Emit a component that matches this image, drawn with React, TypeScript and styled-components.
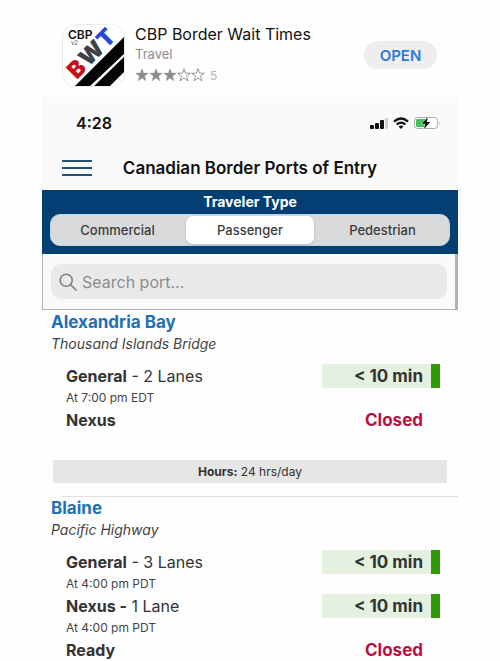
import React, { useState } from "react";
import styled, { createGlobalStyle, css } from "styled-components";

const GlobalStyle = createGlobalStyle`
  * { box-sizing: border-box; }
  body {
    margin: 0;
    background: #fefefe;
    color: #333;
    font-family: Inter, Roboto, "Liberation Sans", sans-serif;
  }
  h1, h2, h3, p { margin: 0; }
  button, input { font-family: inherit; }
`;

const Page = styled.div`
  height: 100vh;
  overflow: hidden;
  padding: 0 42px;
`;

const StoreHeader = styled.header`
  display: flex;
  align-items: flex-start;
  gap: 10px;
  padding: 24px 21px 10px 20px;
`;

const AppIcon = styled.svg`
  flex: none;
  width: 63px;
  height: 63px;
`;

const StoreInfo = styled.div`
  flex: 1;
`;

const AppName = styled.h1`
  font-size: 16px;
  line-height: 20px;
  font-weight: 400;
  color: #111;
  white-space: nowrap;
`;

const Category = styled.p`
  font-size: 13px;
  line-height: 20px;
  color: #8b8b8d;
`;

const Rating = styled.div`
  display: flex;
  align-items: center;
  height: 22px;
  font-size: 12px;
  color: #b4b4b6;
`;

const StarShape = styled.svg`
  width: 14px;
  height: 14px;
`;

const RatingCount = styled.span`
  margin-left: 5px;
`;

const OpenButton = styled.button`
  flex: none;
  width: 73px;
  height: 28px;
  margin-top: 17px;
  padding: 0;
  border: 0;
  border-radius: 14px;
  background: #eeeeef;
  color: #2b7bd9;
  font-size: 15px;
  font-weight: 600;
`;

const StatusBar = styled.div`
  display: flex;
  align-items: center;
  justify-content: space-between;
  height: 52px;
  padding: 0 17px 0 34px;
  background: #fafafb;
`;

const Clock = styled.span`
  font-size: 16px;
  font-weight: 600;
  color: #111;
`;

const StatusIcons = styled.svg`
  width: 72px;
  height: 14px;
`;

const NavBar = styled.div`
  display: grid;
  grid-template-columns: 30px 1fr 30px;
  align-items: center;
  height: 41px;
  padding: 0 20px 4px;
  background: #fafafb;
`;

const MenuButton = styled.button`
  display: flex;
  padding: 0;
  border: 0;
  background: none;
`;

const ScreenTitle = styled.h2`
  font-size: 17px;
  font-weight: 600;
  color: #111;
  text-align: center;
  white-space: nowrap;
`;

const TravelerBar = styled.section`
  padding: 2px 8px 8px;
  background: #033f73;
`;

const TravelerTitle = styled.h3`
  font-size: 14px;
  line-height: 20px;
  font-weight: 700;
  color: #fff;
  text-align: center;
`;

const Segments = styled.div`
  display: grid;
  grid-template-columns: 133px 1fr 133px;
  gap: 2px;
  height: 32px;
  margin-top: 2px;
  padding: 1px 0;
  border: 1px solid #c3d3e2;
  border-radius: 10px;
  background: #d9dadb;
`;

const Segment = styled.button<{ $active: boolean }>`
  padding: 0;
  border: 0;
  border-radius: 7px;
  background: none;
  color: #3a3a3a;
  font-size: 13px;
  font-weight: 500;
  ${(p) =>
    p.$active &&
    css`
      background: #fff;
      box-shadow: 0 1px 3px rgba(0, 0, 0, 0.15);
    `}
`;

const SearchArea = styled.div`
  padding: 10px 8px;
  border: solid #b3b3b5;
  border-width: 0 3px 1px 1px;
  background: #fafafa;
`;

const SearchBox = styled.label`
  display: flex;
  align-items: center;
  gap: 5px;
  height: 35px;
  padding: 0 8px;
  border-radius: 10px;
  background: #e9e9ea;
`;

const SearchInput = styled.input`
  flex: 1;
  min-width: 0;
  padding: 0;
  border: 0;
  outline: 0;
  background: none;
  font-size: 16px;
  color: #333;
  &::placeholder {
    color: #8c8c90;
    opacity: 1;
  }
`;

const Port = styled.article`
  padding: 0 11px 13px 9px;
  & + & {
    background: linear-gradient(#dededf, #dededf) right top / calc(100% - 19px) 1px no-repeat;
  }
`;

const PortName = styled.h2`
  font-size: 17px;
  line-height: 24px;
  font-weight: 700;
  color: #1f70b5;
`;

const Crossing = styled.p`
  font-size: 14px;
  line-height: 20px;
  font-style: italic;
  color: #444;
`;

const Lanes = styled.div`
  padding: 10px 7px 0 15px;
`;

const LaneRow = styled.div`
  display: flex;
  align-items: center;
  justify-content: space-between;
  height: 24px;
  font-size: 16px;
  line-height: 24px;
  white-space: nowrap;
`;

const LaneTime = styled.p`
  font-size: 12px;
  line-height: 20px;
  color: #444;
`;

const Wait = styled.span<{ $closed?: boolean }>`
  width: 118px;
  padding-right: 8px;
  border-right: 9px solid ${(p) => (p.$closed ? "transparent" : "#309a05")};
  background: ${(p) => (p.$closed ? "none" : "#e4f0e0")};
  background-clip: padding-box;
  color: ${(p) => (p.$closed ? "#b80f42" : "#333")};
  font-size: 17px;
  font-weight: 700;
  text-align: right;
`;

const Hours = styled.p`
  margin: 28px 0 0 2px;
  background: #e6e6e6;
  font-size: 12px;
  line-height: 23px;
  text-align: center;
`;

type Lane = { name: string; open?: string; dashBold?: boolean; time?: string };
type PortData = { name: string; crossing: string; lanes: Lane[]; hours?: string };

const ports: PortData[] = [
  {
    name: "Alexandria Bay",
    crossing: "Thousand Islands Bridge",
    lanes: [{ name: "General", open: "2 Lanes", time: "At 7:00 pm EDT" }, { name: "Nexus" }],
    hours: "24 hrs/day",
  },
  {
    name: "Blaine",
    crossing: "Pacific Highway",
    lanes: [
      { name: "General", open: "3 Lanes", time: "At 4:00 pm PDT" },
      { name: "Nexus", open: "1 Lane", dashBold: true, time: "At 4:00 pm PDT" },
      { name: "Ready" },
    ],
  },
];

const travelerTypes = ["Commercial", "Passenger", "Pedestrian"];

function Star({ filled }: { filled: boolean }) {
  return (
    <StarShape viewBox="0 0 14 14" aria-hidden="true">
      <path
        d="M7 .7 8.5 5.1 13.3 5.2 9.5 8.1 10.9 12.8 7 10 3.1 12.8 4.5 8.1 .7 5.2 5.5 5.1Z"
        fill={filled ? "#8b8b8d" : "none"}
        stroke="#8b8b8d"
        strokeWidth={filled ? 0.4 : 0.9}
      />
    </StarShape>
  );
}

function Logo() {
  return (
    <AppIcon viewBox="0 0 63 63" role="img" aria-label="CBP BWT v2">
      <defs>
        <clipPath id="tile">
          <rect x=".5" y=".5" width="62" height="62" rx="13" />
        </clipPath>
      </defs>
      <g clipPath="url(#tile)">
        <rect width="63" height="63" fill="#fff" />
        <path d="M63 12V29L27 63H12Z" fill="#050505" />
        <path d="M63 32V47L47 63H31Z" fill="#050505" />
        <g fontFamily="Inter, sans-serif" fontWeight="900" fontSize="23" textAnchor="middle">
          <text transform="translate(14.5 45) rotate(-45)" y="8" fill="#c4121b">B</text>
          <text transform="translate(29.5 29) rotate(-45)" y="8" fill="#3c4146">W</text>
          <text transform="translate(44 14) rotate(-45)" y="8" fill="#2348d8">T</text>
        </g>
        <text x="6" y="15" fontFamily="Inter, sans-serif" fontWeight="600" fontSize="12" fill="#111">CBP</text>
        <text x="9" y="21" fontFamily="Inter, sans-serif" fontSize="6" fill="#555">v2</text>
      </g>
      <rect x=".5" y=".5" width="62" height="62" rx="13" fill="none" stroke="#ececee" />
    </AppIcon>
  );
}

function PhoneStatus() {
  return (
    <StatusIcons viewBox="0 0 72 14" role="img" aria-label="Signal, Wi-Fi, battery charging">
      <g fill="#111">
        <rect x="1" y="9" width="4" height="4" rx="1" />
        <rect x="6" y="7" width="4" height="6" rx="1" />
        <rect x="11" y="4" width="4" height="9" rx="1" />
      </g>
      <rect x="16" y="2" width="3" height="11" rx="1" fill="#cfcfd1" />
      <g fill="none" stroke="#111" strokeWidth="2.2">
        <path d="M25 5.6Q32 -.6 39 5.6" />
        <path d="M27.6 8.5Q32 4.6 36.4 8.5" />
      </g>
      <path d="M29.6 10.4Q32 8.4 34.4 10.4L32 12.9Z" fill="#111" />
      <rect x="45.5" y="1.5" width="23" height="11" rx="3" fill="#fff" stroke="#a9a9ab" />
      <path d="M48.5 3H56V11H48.5Q47 11 47 9.5V4.5Q47 3 48.5 3Z" fill="#43c25c" />
      <path d="M70 5.2Q71.6 7 70 8.8Z" fill="#a9a9ab" />
      <path d="M59 1 52.6 7.8H56.3L54.8 13 61.4 6.1H57.6Z" fill="#111" stroke="#fff" strokeWidth="1" paintOrder="stroke" />
    </StatusIcons>
  );
}

export default function App() {
  const [type, setType] = useState("Passenger");
  return (
    <>
      <GlobalStyle />
      <Page>
        <StoreHeader>
          <Logo />
          <StoreInfo>
            <AppName>CBP Border Wait Times</AppName>
            <Category>Travel</Category>
            <Rating>
              {[1, 2, 3, 4, 5].map((n) => (
                <Star key={n} filled={n <= 3} />
              ))}
              <RatingCount>5</RatingCount>
            </Rating>
          </StoreInfo>
          <OpenButton>OPEN</OpenButton>
        </StoreHeader>
        <StatusBar>
          <Clock>4:28</Clock>
          <PhoneStatus />
        </StatusBar>
        <NavBar>
          <MenuButton aria-label="Menu">
            <svg width="30" height="18" viewBox="0 0 30 18" stroke="#24507a" strokeWidth="2">
              <path d="M0 2H30M0 9H30M0 16H30" />
            </svg>
          </MenuButton>
          <ScreenTitle>Canadian Border Ports of Entry</ScreenTitle>
        </NavBar>
        <TravelerBar>
          <TravelerTitle>Traveler Type</TravelerTitle>
          <Segments>
            {travelerTypes.map((t) => (
              <Segment key={t} $active={t === type} aria-pressed={t === type} onClick={() => setType(t)}>
                {t}
              </Segment>
            ))}
          </Segments>
        </TravelerBar>
        <SearchArea>
          <SearchBox>
            <svg width="18" height="18" viewBox="0 0 18 18" fill="none" stroke="#808084" strokeWidth="1.6" aria-hidden="true">
              <circle cx="7.2" cy="7.2" r="6" />
              <path d="M11.6 11.6 17 17" strokeLinecap="round" />
            </svg>
            <SearchInput type="text" placeholder="Search port..." aria-label="Search port" />
          </SearchBox>
        </SearchArea>
        <main>
          {ports.map((port) => (
            <Port key={port.name}>
              <PortName>{port.name}</PortName>
              <Crossing>{port.crossing}</Crossing>
              <Lanes>
                {port.lanes.map((lane) => (
                  <React.Fragment key={lane.name}>
                    <LaneRow>
                      <span>
                        <b>{lane.dashBold ? `${lane.name} -` : lane.name}</b>
                        {lane.open && (lane.dashBold ? ` ${lane.open}` : ` - ${lane.open}`)}
                      </span>
                      <Wait $closed={!lane.open}>{lane.open ? "< 10 min" : "Closed"}</Wait>
                    </LaneRow>
                    {lane.time && <LaneTime>{lane.time}</LaneTime>}
                  </React.Fragment>
                ))}
              </Lanes>
              {port.hours && (
                <Hours>
                  <b>Hours:</b> {port.hours}
                </Hours>
              )}
            </Port>
          ))}
        </main>
      </Page>
    </>
  );
}
